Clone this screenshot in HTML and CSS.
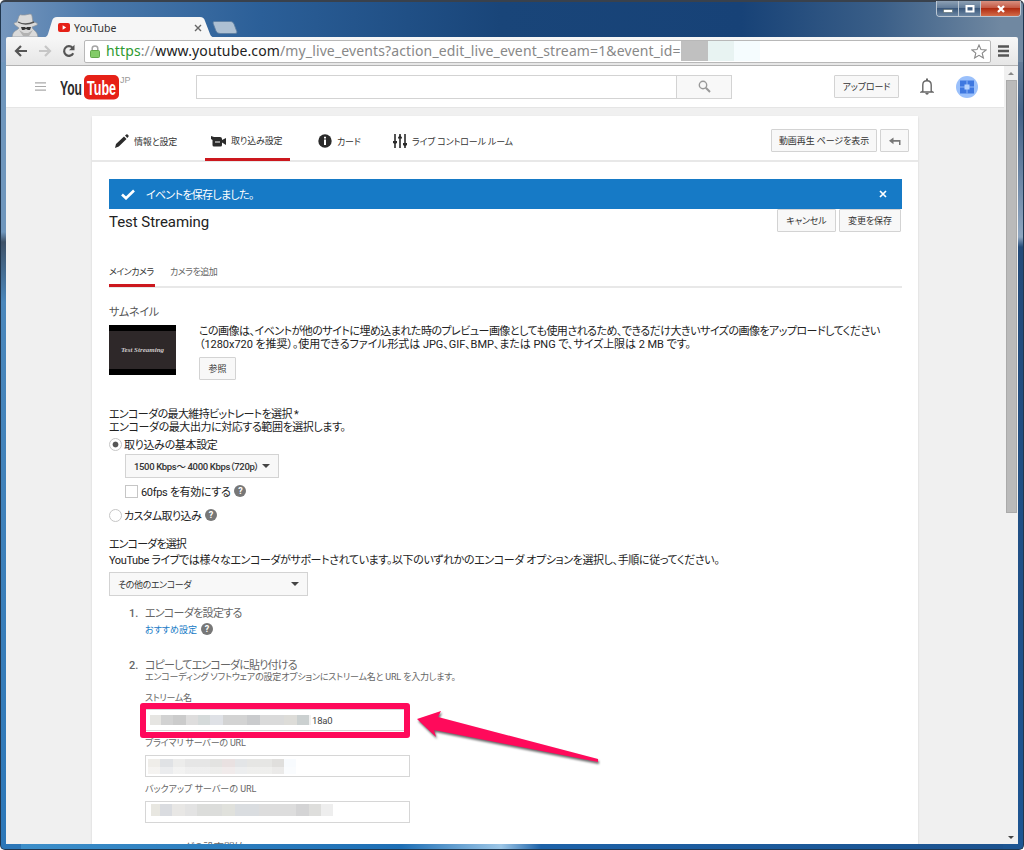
FILE: index.html
```
<!DOCTYPE html>
<html lang="ja">
<head>
  <meta charset="UTF-8">
  <meta name="viewport" content="width=device-width, initial-scale=1.0">
  <title>YouTube</title>
  <link rel="stylesheet" href="styles.css">
</head>
<body>
  <div class="window">
    <!-- Title bar -->
    <div class="titlebar">
      <svg class="incognito" width="28" height="24" viewBox="0 0 28 24">
        <path d="M1 24 C2 17 6 18 8 15 L4 12 Q1 10 6 9 L8 3 Q9 1 11 2 L14 2 L19 1 Q21 1 21 3 L22 9 Q28 10 26 12 L21 14 C22 18 26 17 27 24 Z" fill="#dadada" stroke="#8d949b" stroke-width=".7"/>
        <path d="M7 9 Q14 13 23 9" fill="none" stroke="#555" stroke-width="1.4"/>
        <path d="M10 14 h4 l1 1 1-1 h4 l-1 3 h-2 l-2-1 -2 1 h-2 z" fill="#333"/>
        <path d="M8 17 L12 23 H18 L22 17 L17 20 H13 Z" fill="#b2b2b2"/>
      </svg>
      <div class="tab">
        <svg class="tab-shape" width="172" height="21" viewBox="0 0 172 21">
          <path d="M0 21 Q4 20 5 17 L9 4 Q10 0 14 0 H157 Q161 0 162 4 L167 17 Q168 20 172 21 Z" fill="#f6f6f6"/>
        </svg>
        <svg class="favicon" width="12" height="9" viewBox="0 0 12 9"><rect width="12" height="9" rx="2" fill="#e52117"/><path d="M4.6 2.3 L8.2 4.5 L4.6 6.7Z" fill="#fff"/></svg>
        <span class="tab-title">YouTube</span>
        <svg class="tab-close" width="8" height="8" viewBox="0 0 8 8"><path d="M1 1 L7 7 M7 1 L1 7" stroke="#666" stroke-width="1.4"/></svg>
      </div>
      <svg class="new-tab" width="26" height="13" viewBox="0 0 26 13"><path d="M2 .5 H19 Q21 .5 22 3 L25 11 Q25 12.500 23 12.500 H8 Q5 12.500 4 10 L1 2 Q1 .5 2 .5Z" fill="#adc0d3" stroke="#5d7d9f" stroke-width=".8"/></svg>
      <div class="window-buttons">
        <span class="wb"><svg width="12" height="10" viewBox="0 0 12 10"><rect x="1.500" y="5.500" width="9" height="3" fill="#fff" stroke="#566" stroke-width=".6"/></svg></span>
        <span class="wb"><svg width="12" height="10" viewBox="0 0 12 10"><rect x="2.500" y="2" width="7" height="5.500" fill="none" stroke="#fff" stroke-width="2"/></svg></span>
        <span class="wb wb-close"><svg width="12" height="10" viewBox="0 0 12 10"><path d="M3 2 L9 8 M9 2 L3 8" stroke="#fff" stroke-width="2.300"/></svg></span>
      </div>
    </div>

    <!-- Toolbar -->
    <div class="toolbar">
      <svg class="nav-icon" width="14" height="12" viewBox="0 0 14 12"><path d="M13 6 H2 M7 1 L2 6 L7 11" fill="none" stroke="#555" stroke-width="2.200"/></svg>
      <svg class="nav-icon" width="14" height="12" viewBox="0 0 14 12"><path d="M1 6 H12 M7 1 L12 6 L7 11" fill="none" stroke="#c6c6c6" stroke-width="2.200"/></svg>
      <svg class="nav-icon reload" width="14" height="14" viewBox="0 0 14 14"><path d="M11.200 9.200 A4.800 4.800 0 1 1 10.500 3.800" fill="none" stroke="#555" stroke-width="2.200"/><path d="M12.500 .8 V6.200 H7 Z" fill="#555"/></svg>
      <div class="omnibox">
        <svg class="lock" width="10" height="13" viewBox="0 0 10 13"><path d="M2.200 6 V3.500 Q2.200 1 5 1 Q7.800 1 7.800 3.500 V6" fill="none" stroke="#a5a5a5" stroke-width="1.500"/><rect x=".5" y="5.500" width="9" height="7" rx="1" fill="#83cc68" stroke="#63a74b"/></svg>
        <span class="url"><span class="scheme">https</span>://<span class="host">www.youtube.com</span>/my_live_events?action_edit_live_event_stream=1&amp;event_id=</span>
        <span class="url-mosaic"></span>
        <svg class="star" width="16" height="15" viewBox="0 0 16 15"><path d="M8 1 L10 5.600 L15 6 L11.200 9.200 L12.400 14 L8 11.400 L3.600 14 L4.800 9.200 L1 6 L6 5.600Z" fill="#fff" stroke="#888" stroke-width="1.100"/></svg>
      </div>
      <svg class="menu" width="11" height="12" viewBox="0 0 11 12"><path d="M0 1.500 H11 M0 6 H11 M0 10.500 H11" stroke="#555" stroke-width="2.300"/></svg>
    </div>

    <div class="viewport">
      <div class="page">
        <!-- Masthead -->
        <div class="masthead">
          <svg class="guide" width="11" height="9" viewBox="0 0 11 9"><path d="M0 .8 H11 M0 4.500 H11 M0 8.200 H11" stroke="#aaa" stroke-width="1.200"/></svg>
          <svg class="logo" width="72" height="28" viewBox="0 0 72 28">
            <rect x="24" y="2" width="35" height="24.500" rx="5" fill="#e62117"/>
            <text class="logo-text" x="0" y="22" textLength="22" lengthAdjust="spacingAndGlyphs" fill="#2c2c2c">You</text>
            <text class="logo-text" x="27" y="22" textLength="29" lengthAdjust="spacingAndGlyphs" fill="#fff">Tube</text>
            <text class="logo-region" x="60" y="10">JP</text>
          </svg>
          <div class="search">
            <div class="search-input"></div>
            <div class="search-button">
              <svg width="13" height="13" viewBox="0 0 13 13"><circle cx="5" cy="5" r="3.700" fill="none" stroke="#999" stroke-width="1.400"/><path d="M7.800 7.800 L12 12" stroke="#999" stroke-width="2"/></svg>
            </div>
          </div>
          <div class="button upload"><span>アップロード</span></div>
          <svg class="bell" width="14" height="17" viewBox="0 0 14 17"><path d="M2.800 13 V7 Q2.800 2.800 7 2.800 Q11.200 2.800 11.200 7 V13 L12.800 14 H1.200 Z" fill="none" stroke="#666" stroke-width="1.400"/><path d="M7 .5 V3" stroke="#666" stroke-width="2"/><path d="M5.200 15 H8.800 Q8.500 16.800 7 16.800 Q5.500 16.800 5.200 15" fill="#666"/></svg>
          <svg class="avatar" width="22" height="22" viewBox="0 0 22 22"><circle cx="11" cy="11" r="11" fill="#9ac0fb"/><path d="M4 4.500 H18 V17.500 H4 Z" fill="#3f78e0"/><path d="M11 4.500 V17.500 M4 11 H18" stroke="#8fb6f8" stroke-width="1"/><rect x="8.500" y="8.500" width="5" height="5" fill="#b8d3fd"/></svg>
        </div>

        <div class="card">
          <div class="card-nav">
            <div class="nav-item nav-info">
              <svg width="14" height="14" viewBox="0 0 14 14"><path d="M0 14 L1 10 L9 2.500 L11.500 5 L3.800 12.500Z M10 1.600 L11.300 .5 Q12 0 12.600 .6 L13.500 1.600 Q14 2.200 13.400 2.800 L12.300 4Z" fill="#2b2b2b"/></svg>
              <span class="t-info">情報と設定</span>
            </div>
            <div class="nav-item nav-ingest active">
              <svg width="15" height="12" viewBox="0 0 15 12"><path d="M0 1 L3 2 H9 Q11 2 11 4 V5 L15 3 V10 L11 7.500 V10 Q11 11.500 9.500 11.500 H3 Q1.500 11.500 1.500 10 V5 L0 4Z" fill="#2b2b2b"/><path d="M4 7 H9" stroke="#fff" stroke-width="1"/></svg>
              <span class="t-ingest">取り込み設定</span>
            </div>
            <div class="nav-item nav-cards">
              <svg width="14" height="14" viewBox="0 0 14 14"><circle cx="7" cy="7" r="6.700" fill="#2b2b2b"/><path d="M6 5.500 H8 V11 H6Z M6 2.700 H8 V4.400 H6Z" fill="#fff"/></svg>
              <span class="t-cards">カード</span>
            </div>
            <div class="nav-item nav-room">
              <svg width="14" height="14" viewBox="0 0 14 14"><path d="M2 0 V14 M7 0 V14 M12 0 V14" stroke="#2b2b2b" stroke-width="1.600"/><path d="M0 7 H4 V9 L2 10 L0 9Z M5 3.500 L7 1 L9 3.500 V4.500 H5Z M10 9 H14 V11 L12 12.500 L10 11Z" fill="#2b2b2b"/></svg>
              <span class="t-room">ライブ コントロール ルーム</span>
            </div>
            <div class="nav-buttons">
              <div class="button watch"><span>動画再生 ページを表示</span></div>
              <div class="button back"><svg width="12" height="8" viewBox="0 0 12 8"><path d="M0 3.800 L4.500 .5 V3 H11.500 V8 H10 V4.800 H4.500 V7.200Z" fill="#777"/></svg></div>
            </div>
          </div>

          <div class="content">
            <div class="banner">
              <svg width="14" height="11" viewBox="0 0 14 11"><path d="M1 5.500 L5 9.300 L13 1.500" fill="none" stroke="#fff" stroke-width="2.600"/></svg>
              <span class="t-banner">イベントを保存しました。</span>
              <svg class="banner-close" width="8" height="8" viewBox="0 0 8 8"><path d="M1 1 L7 7 M7 1 L1 7" stroke="#fff" stroke-width="1.700"/></svg>
            </div>
            <div class="title-row">
              <h1>Test Streaming</h1>
              <div class="button cancel"><span>キャンセル</span></div>
              <div class="button save"><span>変更を保存</span></div>
            </div>
            <div class="camera-tabs">
              <div class="camera-tab selected"><span>メインカメラ</span></div>
              <div class="camera-tab"><span>カメラを追加</span></div>
            </div>

            <div class="line thumb-label"><span>サムネイル</span></div>
            <div class="thumb-row">
              <div class="thumb"><span>Test Streaming</span></div>
              <div class="thumb-info">
                <div class="line"><span class="t-desc1">この画像は、イベントが他のサイトに埋め込まれた時のプレビュー画像としても使用されるため、できるだけ大きいサイズの画像をアップロードしてください</span></div>
                <div class="line"><span class="t-desc2">（1280x720 を推奨）。使用できるファイル形式は JPG、GIF、BMP、または PNG で、サイズ上限は 2 MB です。</span></div>
                <div class="button browse"><span>参照</span></div>
              </div>
            </div>

            <div class="line bitrate"><span class="t-bitrate">エンコーダの最大維持ビットレートを選択 *</span></div>
            <div class="line"><span class="t-range">エンコーダの最大出力に対応する範囲を選択します。</span></div>
            <div class="radio-row basic">
              <i class="radio checked"></i><span class="t-basic">取り込みの基本設定</span>
            </div>
            <div class="select kbps"><span>1500 Kbps〜 4000 Kbps（720p）</span><i class="caret"></i></div>
            <div class="check-row">
              <i class="checkbox"></i><span class="t-fps">60fps を有効にする</span><i class="help">?</i>
            </div>
            <div class="radio-row custom">
              <i class="radio"></i><span class="t-custom">カスタム取り込み</span><i class="help">?</i>
            </div>

            <div class="line encoder"><span class="t-encoder">エンコーダを選択</span></div>
            <div class="line support"><span class="t-support">YouTube ライブでは様々なエンコーダがサポートされています。以下のいずれかのエンコーダ オプションを選択し、手順に従ってください。</span></div>
            <div class="select other"><span>その他のエンコーダ</span><i class="caret"></i></div>

            <div class="steps">
              <div class="step step-one"><b>1.</b><span class="t-step1">エンコーダを設定する</span></div>
              <div class="step-link"><span>おすすめ設定</span><i class="help">?</i></div>
              <div class="step step-two"><b>2.</b><span class="t-step2">コピーしてエンコーダに貼り付ける</span></div>
              <div class="step-note"><span class="t-note">エンコーディング ソフトウェアの設定オプションにストリーム名と URL を入力します。</span></div>
              <div class="field-label first"><span class="t-name">ストリーム名</span></div>
              <div class="field stream-name">
                <span class="mosaic m-name"></span><span>18a0</span>
                <div class="highlight"></div>
                <svg class="arrow" width="196" height="66" viewBox="0 0 196 66"><path d="M5 15 L29 7 L26 13 L186 55 V58 L22 26 L24 33 Z" fill="#ff0a5b"/></svg>
              </div>
              <div class="field-label"><span class="t-primary">プライマリ サーバーの URL</span></div>
              <div class="field"><span class="mosaic m-primary"></span></div>
              <div class="field-label backup"><span>バックアップ サーバーの URL</span></div>
              <div class="field"><span class="mosaic m-backup"></span></div>
              <div class="step-next"><span>エンコーダの設定開始</span></div>
            </div>
          </div>
        </div>
      </div>
      <div class="scrollbar">
        <i class="scroll-up"></i>
        <div class="scroll-thumb"></div>
        <i class="scroll-down"></i>
      </div>
    </div>
  </div>
</body>
</html>
```
FILE: styles.css
```
* {
  box-sizing: border-box;
}

body {
  margin: 0;
  width: 1024px;
  height: 850px;
  overflow: hidden;
  font-family: Roboto, 'Noto Sans CJK JP', sans-serif;
  font-size: 11px;
  color: #222;
  font-feature-settings: 'palt';
}

svg {
  display: block;
  flex: none;
}

span {
  white-space: nowrap;
}

i, b {
  flex: none;
  font-style: normal;
}

.window {
  display: flex;
  flex-direction: column;
  height: 850px;
  padding: 2px 5px 5px 5px;
  border-radius: 5px;
  border: 1px solid #20364e;
  border-top: 2px solid #39414c;
  background:
    linear-gradient(90deg, #7596bd 0, #4a78aa 100px, #2b5f98 260px, #194579 500px, #174277 740px, #3b5f88 880px, #7088a1 1000px) 0 0 / 100% 60px no-repeat,
    linear-gradient(#6f96bc 0, #6f96bc 230px, #3f5268 240px, #4b87bb 300px, #2c77b8 844px) 0 0 / 20px 100% no-repeat,
    linear-gradient(#8b9cae 0, #456287 110px, #8fa6c0 235px, #234a79 245px, #1d5592 844px) 100% 0 / 20px 100% no-repeat,
    linear-gradient(90deg, #3e90ca, #1e6fb5 400px, #9dc6e6 500px, #1d62a8 540px, #1c528e);
}

.titlebar {
  display: flex;
  height: 33px;
  flex: none;
}

.incognito {
  margin: 9px 0 0 5px;
}

.tab {
  position: relative;
  display: flex;
  align-items: center;
  width: 172px;
  height: 21px;
  margin: 13px 0 0 4px;
  padding: 0 13px 0 15px;
}

.tab-shape {
  position: absolute;
  left: 0;
  top: 0;
}

.favicon,
.tab-title,
.tab-close {
  position: relative;
}

.tab-title {
  margin-left: 4px;
  font: 10.5px 'Noto Sans', sans-serif;
  color: #333;
}

.tab-close {
  margin-left: auto;
}

.new-tab {
  margin: 17px 0 0 -3px;
}

.window-buttons {
  display: flex;
  height: 16px;
  margin: -3px -3px 0 auto;
  border: 1px solid #bdc8d4;
  border-top: 0;
  border-radius: 0 0 4px 4px;
  overflow: hidden;
}

.wb {
  display: flex;
  align-items: center;
  justify-content: center;
  width: 22px;
  border-right: 1px solid #bac5d1;
  background: linear-gradient(#8da0b4, #627c99 45%, #3b587b 50%, #6c87a4);
}

.wb-close {
  width: 39px;
  border: 0;
  background: linear-gradient(#d99080, #c45a45 45%, #b02c12 50%, #d36b48);
}

.toolbar {
  display: flex;
  align-items: center;
  height: 29px;
  flex: none;
  padding: 0 9px 0 8px;
  background: linear-gradient(#f7f7f7, #e6e6e6);
  border-bottom: 1px solid #b3b3b3;
  border-radius: 2px 2px 0 0;
}

.nav-icon {
  margin-right: 10px;
}

.reload {
  margin-right: 8px;
}

.omnibox {
  display: flex;
  align-items: center;
  flex: 1;
  height: 23px;
  margin-right: 7px;
  padding: 0 3px 0 5px;
  border: 1px solid #b8b8b8;
  border-radius: 2px;
  background: #fff;
}

.url {
  width: 575px;
  margin-left: 6px;
  font: 14px/20px 'Noto Sans', sans-serif;
  letter-spacing: .13px;
  color: #888;
}

.scheme {
  color: #2f9a31;
}

.host {
  color: #222;
}

.url-mosaic {
  width: 79px;
  height: 20px;
  background: linear-gradient(90deg, #c0c0c0 27px, #e8f3f2 27px 53px, #f5fcfe 53px);
}

.star {
  margin-left: auto;
}

.viewport {
  display: flex;
  flex: 1;
  min-height: 0;
  background: #f0f0f0;
}

.page {
  width: 998px;
  overflow: hidden;
}

.masthead {
  display: flex;
  align-items: center;
  height: 42px;
  padding: 0 26px 0 29px;
  background: #fff;
  border-bottom: 1px solid #e5e5e5;
}

.logo {
  margin: 0 0 0 14px;
}

.logo-text {
  font: bold 21px 'Liberation Sans Narrow', 'Liberation Sans', sans-serif;
}

.logo-region {
  font: 9px 'Liberation Sans', sans-serif;
  fill: #999;
}

.search {
  display: flex;
  width: 536px;
  height: 24px;
  margin-left: 64px;
  border: 1px solid #d3d3d3;
}

.search-input {
  flex: 1;
}

.search-button {
  display: flex;
  align-items: center;
  justify-content: center;
  width: 55px;
  border-left: 1px solid #d3d3d3;
  background: #f8f8f8;
}

.button {
  display: flex;
  flex: none;
  align-items: center;
  justify-content: center;
  height: 23px;
  border: 1px solid #d3d3d3;
  border-radius: 1px;
  background: #f8f8f8;
  font-size: 9px;
  letter-spacing: -.1px;
  color: #333;
}

.upload {
  width: 65px;
  margin-left: 102px;
}

.bell {
  margin-left: 21px;
}

.avatar {
  margin-left: 22px;
}

.card {
  width: 826px;
  height: 760px;
  margin: 8px 0 0 86px;
  background: #fff;
  box-shadow: 0 1px 2px rgba(0, 0, 0, .12);
}

.card-nav {
  display: flex;
  height: 46px;
  padding: 0 9px 0 13px;
  border-bottom: 2px solid #e8e8e8;
}

.nav-item {
  display: flex;
  align-items: center;
  height: 45px;
  padding: 5px 7px 0 10px;
  font-size: 9px;
  letter-spacing: -.15px;
  color: #333;
}

.nav-item span {
  margin-left: 5px;
}

.nav-info {
  width: 100px;
}

.nav-ingest {
  width: 85px;
  padding: 7px 0 0 6px;
}

.active {
  border-bottom: 3px solid #cc181e;
}

.nav-cards {
  width: 94px;
  padding-left: 28px;
}

.nav-room {
  padding-left: 9px;
}

.nav-buttons {
  display: flex;
  gap: 3px;
  margin: 13px 0 0 auto;
}

.watch {
  width: 106px;
}

.back {
  width: 29px;
}

.content {
  padding: 17px 16px 0 17px;
}

.banner {
  display: flex;
  align-items: center;
  height: 30px;
  padding: 0 15px 0 12px;
  background: #167ac6;
  color: #fff;
}

.t-banner {
  margin-left: 11px;
  letter-spacing: -.7px;
}

.banner-close {
  margin-left: auto;
}

.title-row {
  display: flex;
  height: 23px;
}

h1 {
  flex: 1;
  margin: 0;
  font-size: 15px;
  line-height: 27px;
  font-weight: normal;
  letter-spacing: -.05px;
}

.cancel {
  width: 59px;
  margin-right: 3px;
}

.save {
  width: 62px;
  margin-right: 1px;
}

.camera-tabs {
  display: flex;
  gap: 15px;
  height: 56px;
  padding-top: 32px;
  border-bottom: 2px solid #e8e8e8;
}

.camera-tab {
  height: 23px;
  line-height: 16px;
  font-size: 9px;
  letter-spacing: -.5px;
  color: #666;
}

.selected {
  width: 46px;
  color: #333;
  border-bottom: 3px solid #cc181e;
}

.line {
  height: 13px;
  line-height: 13px;
}

.thumb-label {
  margin: 18px 0 6px;
  letter-spacing: -.2px;
  color: #555;
}

.thumb-row {
  display: flex;
  height: 83px;
}

.thumb {
  display: flex;
  flex: none;
  align-items: center;
  justify-content: center;
  width: 67px;
  height: 50px;
  border: solid #000;
  border-width: 6px 0;
  background: #2e2829;
  font: italic bold 7px 'Liberation Serif', serif;
  color: #d0cccc;
}

.thumb-info {
  margin-left: 23px;
}

.t-desc1 {
  letter-spacing: -.52px;
}

.t-desc2 {
  letter-spacing: -.05px;
}

.browse {
  width: 37px;
  margin-top: 6px;
}

.t-bitrate {
  letter-spacing: -.62px;
}

.t-range {
  letter-spacing: -.42px;
}

.radio-row,
.check-row {
  display: flex;
  align-items: center;
  height: 14px;
}

.radio-row.basic {
  margin-top: 3px;
}

.t-basic,
.t-fps {
  letter-spacing: -.33px;
}

.t-custom {
  letter-spacing: -.6px;
}

.radio {
  width: 13px;
  height: 13px;
  margin-right: 2px;
  border: 1px solid #c6c6c6;
  border-radius: 50%;
}

.checked {
  background: radial-gradient(circle, #555 2.5px, #fff 3.3px);
}

.select {
  display: flex;
  align-items: center;
  height: 24px;
  padding: 0 8px;
  border: 1px solid #d3d3d3;
  background: #f8f8f8;
  font-size: 9px;
  letter-spacing: -.4px;
  color: #333;
}

.caret {
  margin-left: auto;
  border: 4px solid transparent;
  border-top-color: #444;
  border-bottom: 0;
}

.kbps {
  width: 154px;
  margin: 3px 0 0 16px;
  font-size: 9.5px;
  font-weight: 500;
  letter-spacing: -.35px;
}

.check-row {
  margin: 6px 0 0 16px;
}

.checkbox {
  width: 13px;
  height: 13px;
  margin-right: 3px;
  border: 1px solid #c6c6c6;
}

.help {
  width: 12px;
  height: 12px;
  margin-left: 4px;
  border-radius: 50%;
  background: #777;
  color: #fff;
  font: bold 9px/12px Roboto, sans-serif;
  text-align: center;
}

.custom {
  margin-top: 10px;
}

.encoder {
  margin-top: 16px;
}

.t-encoder {
  letter-spacing: -.85px;
}

.support {
  margin-top: 3px;
}

.t-support {
  letter-spacing: -.39px;
}

.other {
  width: 199px;
  margin-top: 5px;
}

.steps {
  padding-left: 20px;
  color: #666;
}

.step {
  display: flex;
  height: 14px;
  line-height: 14px;
}

.step b {
  width: 16px;
  font-weight: 500;
}

.step-one {
  margin-top: 11px;
}

.t-step1 {
  letter-spacing: -.7px;
}

.t-step2 {
  letter-spacing: -.8px;
}

.step-link {
  display: flex;
  align-items: center;
  height: 14px;
  margin: 1px 0 0 16px;
  font-size: 9px;
  color: #167ac6;
}

.step-two {
  margin-top: 23px;
}

.step-note,
.field-label {
  height: 12px;
  margin-left: 16px;
  line-height: 12px;
  font-size: 9px;
}

.step-note {
  margin-top: -2px;
}

.t-note,
.t-primary {
  letter-spacing: -.19px;
}

.t-name {
  letter-spacing: -.3px;
}

.first {
  margin-top: 9px;
}

.field {
  position: relative;
  display: flex;
  align-items: center;
  width: 265px;
  height: 22px;
  margin: 6px 0 0 16px;
  padding-left: 4px;
  border: 1px solid #d6d6d6;
  font-size: 9.5px;
  letter-spacing: -.2px;
  color: #444;
}

.stream-name {
  margin: 5px 0 6px 16px;
}

.backup {
  margin-top: 6px;
}

/* marker frame round the stream name */
.highlight {
  position: absolute;
  left: -6px;
  top: -7px;
  width: 270px;
  height: 35px;
  border: 6px solid #ff0a5b;
  border-radius: 3px;
}

.arrow {
  position: absolute;
  left: 266px;
  top: -6px;
  filter: drop-shadow(1px 2px 1px rgba(0, 0, 0, .6));
}

.mosaic {
  height: 10px;
}

.m-name {
  width: 161px;
  margin-right: 1px;
  background: linear-gradient(90deg, #e6e5e2 11px, #d2d2d2 11px 23px, #cbcbcb 23px 36px, #dedddd 36px 48px, #d5dada 48px 60px, #dfe1e6 60px 73px, #d3d3d3 73px 97px, #cacbcd 97px 110px, #dadada 110px 134px, #dddcd8 134px 147px, #cbd0d0 147px 159px, #f2f2f2 159px);
}

.m-primary {
  width: 148px;
  height: 15px;
  margin-left: -2px;
  background:
    linear-gradient(rgba(255, 255, 255, 0) 8px, rgba(255, 255, 255, .35) 8px),
    linear-gradient(90deg, #efede9 12px, #e0e2e5 12px 25px, #ececeb 25px 37px, #e6e6e6 37px 62px, #e3e3e1 62px 74px, #e9e1e1 74px 87px, #e3e5e7 87px 99px, #e6e6e4 99px 124px, #e0dfdd 124px 136px, #f8fbfe 136px);
}

.m-backup {
  width: 182px;
  height: 12px;
  margin: -4px 0 0 1px;
  background: linear-gradient(90deg, #e8e7e1 9px, #dadce0 9px 21px, #e8e7e5 21px 34px, #e3e3e3 34px 46px, #dcdddb 46px 71px, #e0e1dc 71px 84px, #dadde0 84px 108px, #dddddd 108px 145px, #d4d4d5 145px 158px, #dededc 158px 170px, #eeeeee 170px);
}

.step-next {
  height: 16px;
  margin: 18px 0 0 16px;
  line-height: 16px;
  letter-spacing: -.7px;
}

.scrollbar {
  display: flex;
  flex-direction: column;
  align-items: center;
  flex: 1;
  padding: 6px 0 5px;
  background: #f0f0f0;
}

.scroll-up,
.scroll-down {
  border: 3px solid transparent;
}

.scroll-up {
  border-top: 0;
  border-bottom-color: #888;
}

.scroll-down {
  margin-top: auto;
  border-bottom: 0;
  border-top-color: #444;
}

.scroll-thumb {
  width: 11px;
  height: 433px;
  margin-top: 5px;
  background: #bababa;
  border: 1px solid #aaa;
}
```
